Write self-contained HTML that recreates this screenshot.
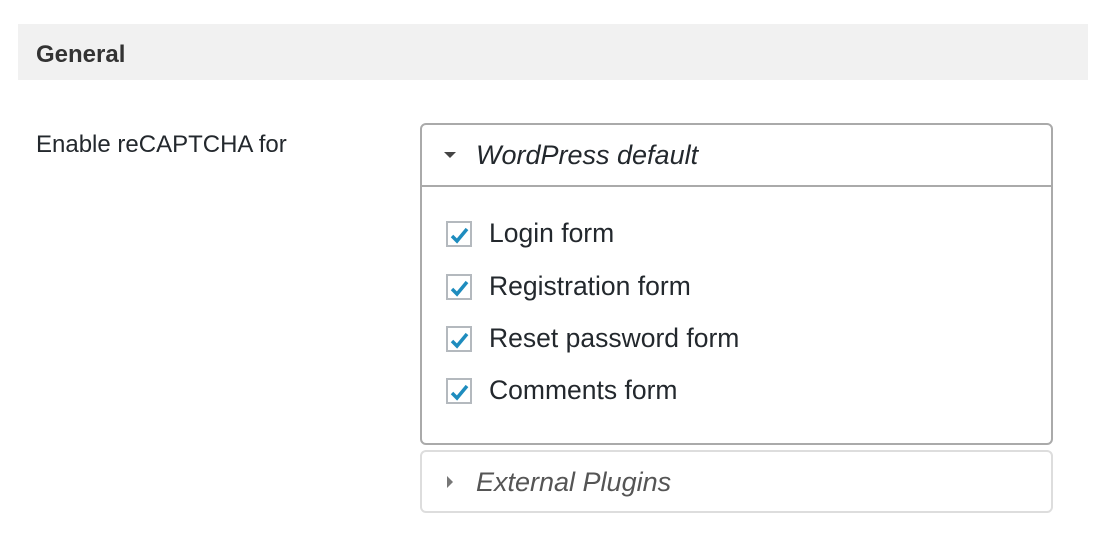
<!DOCTYPE html>
<html><head><style>
body{margin:0;width:1105px;height:533px;background:#fff;font-family:"Liberation Sans",sans-serif;color:#23282d;position:relative;overflow:hidden}
.hd{position:absolute;left:18px;top:24px;width:1070px;height:56px;background:#f1f1f1}
.hd span{position:absolute;left:18px;top:17px;font-size:24px;font-weight:bold;color:#333}
.lbl{position:absolute;left:36px;top:131px;font-size:24px;color:#23282d}
.box{position:absolute;left:420px;width:633px;border:2px solid #aaa;border-radius:6px;box-sizing:border-box}
.b1{top:123px;height:322px;border-width:2px}
.b1 .h{height:62px;border-bottom:2px solid #aaa;box-sizing:border-box;position:relative}
.t{position:absolute;left:54px;top:15px;font-size:27px;font-style:italic}
.tri{position:absolute;left:22px;top:27px;width:0;height:0;border-left:6px solid transparent;border-right:6px solid transparent;border-top:6px solid #444}
.b2{top:450px;height:63px;border-color:#ddd}
.b2 .t{top:15px;color:#555}
.tri2{position:absolute;left:25px;top:24px;border-top:6px solid transparent;border-bottom:6px solid transparent;border-left:6px solid #777}
.row{position:absolute;left:24px;font-size:26.5px}
.cb{position:absolute;left:0;top:0;width:26px;height:26px;border:2px solid #b4b9be;box-sizing:border-box;background:#fff}
.row span{position:absolute;left:43px;top:-3px;white-space:nowrap}
</style></head><body>
<div class="hd"><span>General</span></div>
<div class="lbl">Enable reCAPTCHA for</div>
<div class="box b1">
<div class="h"><div class="tri"></div><div class="t">WordPress default</div></div>
<div class="row" style="top:96px"><div class="cb"><svg width="22" height="22" viewBox="0 0 22 22"><path d="M4 11l5 5L19 4" stroke="#1e8cbe" stroke-width="3.5" fill="none"/></svg></div><span>Login form</span></div>
<div class="row" style="top:149px"><div class="cb"><svg width="22" height="22" viewBox="0 0 22 22"><path d="M4 11l5 5L19 4" stroke="#1e8cbe" stroke-width="3.5" fill="none"/></svg></div><span>Registration form</span></div>
<div class="row" style="top:201px"><div class="cb"><svg width="22" height="22" viewBox="0 0 22 22"><path d="M4 11l5 5L19 4" stroke="#1e8cbe" stroke-width="3.5" fill="none"/></svg></div><span>Reset password form</span></div>
<div class="row" style="top:253px"><div class="cb"><svg width="22" height="22" viewBox="0 0 22 22"><path d="M4 11l5 5L19 4" stroke="#1e8cbe" stroke-width="3.5" fill="none"/></svg></div><span>Comments form</span></div>
</div>
<div class="box b2"><div class="tri2"></div><div class="t">External Plugins</div></div>
</body></html>
